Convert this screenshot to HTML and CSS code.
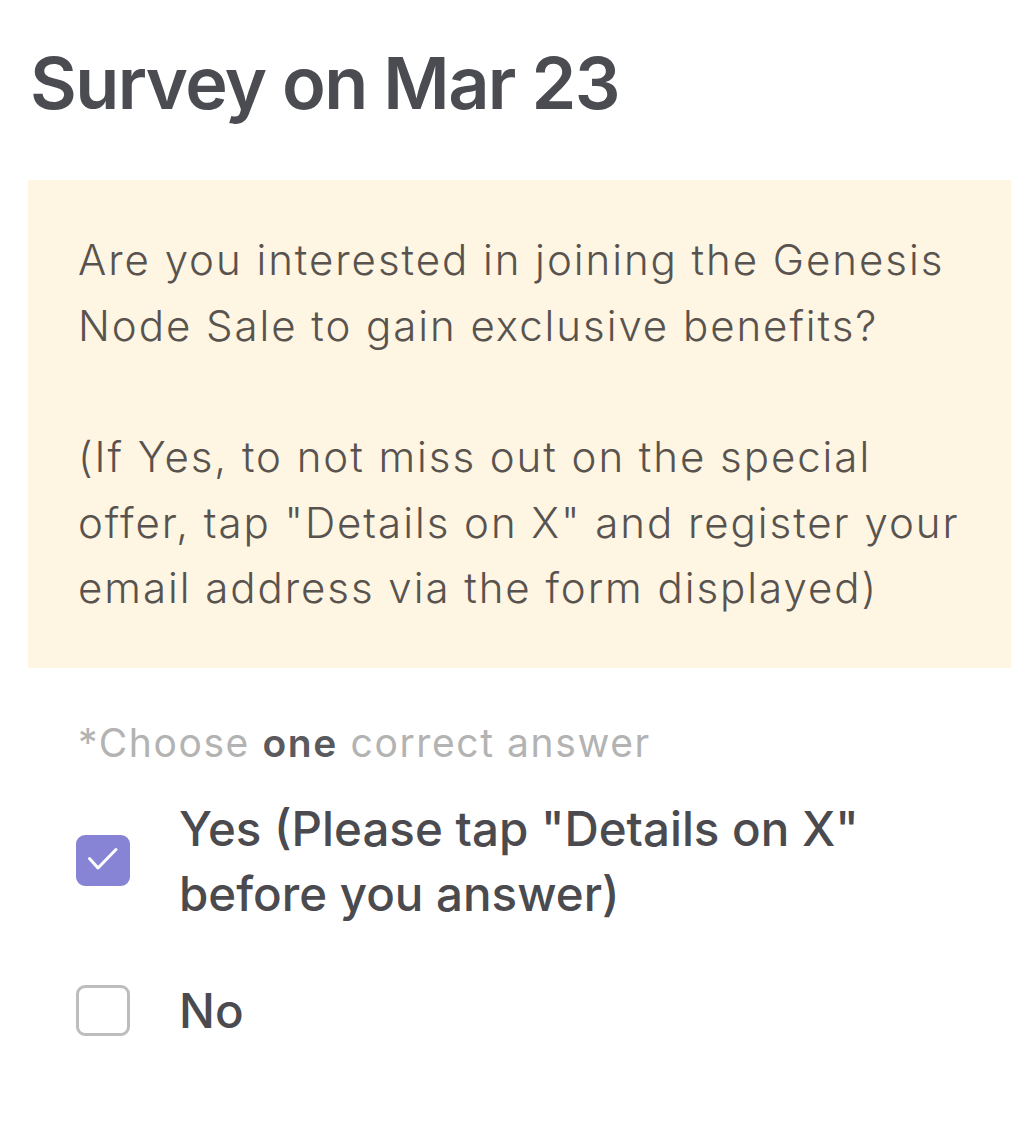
FILE: index.html
```html
<!DOCTYPE html>
<html>
<head>
<meta charset="utf-8">
<link rel="stylesheet" href="styles.css">
</head>
<body>
<main class="page">
  <h1 class="title">Survey on Mar 23</h1>
  <section class="question">
    <p>Are you interested in joining the Genesis Node Sale to gain exclusive benefits?</p>
    <p>(If Yes, to not miss out on the special offer, tap "Details on X" and register your email address via the form displayed)</p>
  </section>
  <p class="hint">*Choose <b>one</b> correct answer</p>
  <ul class="options">
    <li class="option">
      <span class="box checked">
        <svg class="check" viewBox="0 0 54 51" width="54" height="51"><path d="M13.5 23.5l8.5 9.5L40 14.5" fill="none" stroke="#fff" stroke-width="3" stroke-linecap="round" stroke-linejoin="round"/></svg>
      </span>
      <span class="label">Yes (Please tap "Details on X" before you answer)</span>
    </li>
    <li class="option">
      <span class="box"></span>
      <span class="label">No</span>
    </li>
  </ul>
</main>
</body>
</html>
```

FILE: styles.css
```css
html, body {
  margin: 0;
  padding: 0;
  background: #ffffff;
}
.page {
  padding: 28px 16px 0 28px;
  font-family: Inter, "Noto Sans", sans-serif;
}
.title {
  margin: 0 0 0 2px;
  font-size: 72px;
  line-height: 110px;
  font-weight: 600;
  color: #4b4c51;
  letter-spacing: -1.6px;
}
.question {
  margin-top: 42px;
  background: #fef5e2;
  padding: 47px 40px 47px 50px;
  font-weight: 300;
  font-size: 42px;
  line-height: 65.5px;
  letter-spacing: 1.95px;
  color: #58534f;
}
.question p {
  margin: 0;
}
.question p + p {
  margin-top: 66px;
}
.hint {
  margin: 47px 0 0 50px;
  font-size: 39px;
  line-height: 56px;
  letter-spacing: 1.6px;
  color: #b3b3b3;
}
.hint b {
  color: #5a5a5e;
  font-weight: 600;
}
.options {
  list-style: none;
  margin: 25px 0 0 48px;
  padding: 0;
}
.option {
  display: flex;
  align-items: center;
  gap: 49px;
  margin-bottom: 52px;
}
.box {
  flex: none;
  box-sizing: border-box;
  width: 54px;
  height: 51px;
  border: 3px solid #bdbdbd;
  border-radius: 9px;
  position: relative;
}
.box.checked {
  background: #8784d5;
  border-color: #8784d5;
}
.check {
  position: absolute;
  left: -3px;
  top: -3px;
}
.label {
  font-size: 47.5px;
  line-height: 65px;
  font-weight: 500;
  color: #4a4a4f;
  max-width: 710px;
}
```
